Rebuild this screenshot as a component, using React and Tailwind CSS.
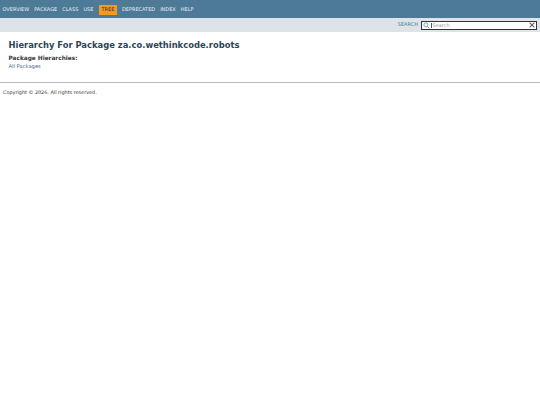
import React from 'react'

const navItems = ['OVERVIEW', 'PACKAGE', 'CLASS', 'USE', 'TREE', 'DEPRECATED', 'INDEX', 'HELP']

export default function App() {
  return (
    <div className="min-h-[405px] bg-white font-['DejaVu_Sans',sans-serif] text-[#353833]">
      <header>
        <nav className="flex h-[18px] items-center bg-[#4d7a97] pl-[2.5px] pt-[1px] text-[5px] text-[#e8eef2]">
          {navItems.map((item) =>
            item === 'TREE' ? (
              <span key={item} className="mr-[5px] ml-[0.5px] flex h-[10px] w-[18px] items-center justify-center bg-[#f8981d] text-[#253441]">
                {item}
              </span>
            ) : (
              <a key={item} className="mr-[5px]">{item}</a>
            )
          )}
        </nav>
        <div className="flex h-[14px] items-center justify-end bg-[#dee3e9] pr-[3px]">
          <label className="mr-[3px] text-[5px] text-[#4d7a97]">SEARCH</label>
          <div className="flex h-[9px] w-[116px] items-center border border-[#333] bg-white">
            <svg className="ml-[1px] h-[7px] w-[7px]" viewBox="0 0 12 12" fill="none" stroke="#5b9ab8" strokeWidth="1.5">
              <circle cx="5" cy="5" r="3.5" />
              <path d="M7.5 7.5 11 11" stroke="#888" />
            </svg>
            <span className="ml-[1px] flex-1 border-l border-[#555] pl-[0.5px] text-[5px] leading-none text-[#999]">Search</span>
            <svg className="mr-[1px] h-[6px] w-[6px]" viewBox="0 0 10 10" fill="none" stroke="#666" strokeWidth="2">
              <path d="M1 1 9 9M9 1 1 9" />
            </svg>
          </div>
        </div>
      </header>
      <main className="px-[8.5px] pt-[8px]">
        <h1 className="text-[8.4px] font-bold leading-[11px] text-[#2c4557]">Hierarchy For Package za.co.wethinkcode.robots</h1>
        <div className="mt-[4px] text-[5.8px] font-bold leading-[7px] text-[#353833]">Package Hierarchies:</div>
        <a className="block text-[5.2px] leading-[8px] text-[#4a6782]">All Packages</a>
      </main>
      <hr className="mt-[12px] border-t border-[#bbb]" />
      <footer className="px-[3px] pt-[6px] text-[4.9px] leading-[7px]">Copyright © 2026. All rights reserved.</footer>
    </div>
  )
}
